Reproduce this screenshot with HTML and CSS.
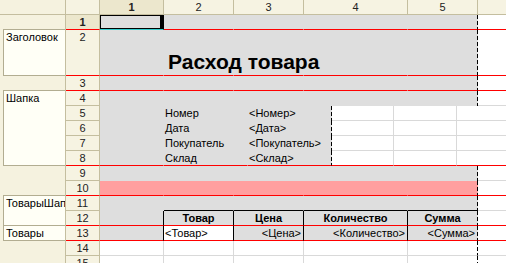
FILE: index.html
```html
<!DOCTYPE html>
<html lang="ru">
<head>
    <meta charset="UTF-8">
    <title>Расход товара - макет</title>
    <link rel="stylesheet" href="styles.css">
</head>
<body>

<div class="sheet">
    <!-- Named areas on the left -->
    <div class="groups">
        <div class="corner"></div>
        <div class="group g-title">Заголовок</div>
        <div class="group g-head">Шапка</div>
        <div class="group g-thead">ТоварыШапка</div>
        <div class="group g-rows">Товары</div>
    </div>

    <div class="grid">
        <!-- Column headers -->
        <div class="row">
            <div class="rn"></div>
            <div class="h hs w1">1</div>
            <div class="h w2">2</div>
            <div class="h w3">3</div>
            <div class="h w4">4</div>
            <div class="h w5">5</div>
            <div class="h wx"></div>
        </div>

        <div class="row sep">
            <div class="rn on">1</div>
            <div class="g w1 sel"></div>
            <div class="g w2"></div>
            <div class="g w3"></div>
            <div class="g w4"></div>
            <div class="g w5 dash"></div>
            <div class="w wx"></div>
        </div>
        <div class="row sep tall">
            <div class="rn">2</div>
            <div class="g w1"></div>
            <div class="g w2 title">Расход товара</div>
            <div class="g w3"></div>
            <div class="g w4"></div>
            <div class="g w5 dash"></div>
            <div class="w wx"></div>
        </div>
        <div class="row sep">
            <div class="rn">3</div>
            <div class="g w1"></div>
            <div class="g w2"></div>
            <div class="g w3"></div>
            <div class="g w4"></div>
            <div class="g w5 dash"></div>
            <div class="w wx"></div>
        </div>
        <div class="row">
            <div class="rn">4</div>
            <div class="g w1"></div>
            <div class="g w2"></div>
            <div class="g w3"></div>
            <div class="g w4"></div>
            <div class="g w5 dash"></div>
            <div class="w wx"></div>
        </div>

        <!-- Header block has its own column widths -->
        <div class="row">
            <div class="rn">5</div>
            <div class="g w1"></div>
            <div class="g k1">Номер</div>
            <div class="g k2 dash">&lt;Номер&gt;</div>
            <div class="w k3"></div>
            <div class="w k4"></div>
            <div class="w wx"></div>
        </div>
        <div class="row">
            <div class="rn">6</div>
            <div class="g w1"></div>
            <div class="g k1">Дата</div>
            <div class="g k2 dash">&lt;Дата&gt;</div>
            <div class="w k3"></div>
            <div class="w k4"></div>
            <div class="w wx"></div>
        </div>
        <div class="row">
            <div class="rn">7</div>
            <div class="g w1"></div>
            <div class="g k1">Покупатель</div>
            <div class="g k2 dash">&lt;Покупатель&gt;</div>
            <div class="w k3"></div>
            <div class="w k4"></div>
            <div class="w wx"></div>
        </div>
        <div class="row sep">
            <div class="rn">8</div>
            <div class="g w1"></div>
            <div class="g k1">Склад</div>
            <div class="g k2 dash">&lt;Склад&gt;</div>
            <div class="w k3"></div>
            <div class="w k4"></div>
            <div class="w wx"></div>
        </div>

        <div class="row">
            <div class="rn">9</div>
            <div class="g w1"></div>
            <div class="g w2"></div>
            <div class="g w3"></div>
            <div class="g w4"></div>
            <div class="g w5 dash"></div>
            <div class="w wx"></div>
        </div>
        <div class="row sep">
            <div class="rn">10</div>
            <div class="p w1"></div>
            <div class="p w2"></div>
            <div class="p w3"></div>
            <div class="p w4"></div>
            <div class="p w5 dash"></div>
            <div class="w wx"></div>
        </div>
        <div class="row">
            <div class="rn">11</div>
            <div class="g w1"></div>
            <div class="g w2 tt"></div>
            <div class="g w3 tt"></div>
            <div class="g w4 tt"></div>
            <div class="g w5 tt dash"></div>
            <div class="w wx"></div>
        </div>

        <!-- Goods table -->
        <div class="row sep">
            <div class="rn">12</div>
            <div class="g w1 tb"></div>
            <div class="g w2 tb th">Товар</div>
            <div class="g w3 tb th">Цена</div>
            <div class="g w4 tb th">Количество</div>
            <div class="g w5 dash th">Сумма</div>
            <div class="w wx"></div>
        </div>
        <div class="row sep">
            <div class="rn">13</div>
            <div class="g w1 tb"></div>
            <div class="w w2 tb txt">&lt;Товар&gt;</div>
            <div class="g w3 tb num">&lt;Цена&gt;</div>
            <div class="g w4 tb num">&lt;Количество&gt;</div>
            <div class="g w5 dash num">&lt;Сумма&gt;</div>
            <div class="w wx"></div>
        </div>

        <div class="row">
            <div class="rn">14</div>
            <div class="w w1"></div>
            <div class="w w2"></div>
            <div class="w w3"></div>
            <div class="w w4"></div>
            <div class="w w5 dash"></div>
            <div class="w wx"></div>
        </div>
        <div class="row">
            <div class="rn">15</div>
            <div class="w w1"></div>
            <div class="w w2"></div>
            <div class="w w3"></div>
            <div class="w w4"></div>
            <div class="w w5 dash"></div>
            <div class="w wx"></div>
        </div>
    </div>
</div>

</body>
</html>
```

FILE: styles.css
```css
* {
    box-sizing: border-box;
}

body {
    margin: 0;
    font: 11px "Liberation Sans", Arial, sans-serif;
    color: #000;
    background: #fff;
}

.sheet {
    display: flex;
    width: 506px;
    height: 263px;
    overflow: hidden;
}

/* Named areas column */
.groups {
    width: 66px;
    flex: none;
    display: flex;
    flex-direction: column;
    background: #f5f2df;
    border-right: 1px solid #c4be9f;
}

.corner {
    height: 15px;
    flex: none;
    border-bottom: 1px solid #c4be9f;
}

.group {
    flex: none;
    margin-left: 3px;
    padding-left: 2px;
    line-height: 14px;
    white-space: nowrap;
    overflow: hidden;
    background: #fffff6;
    border: 1px solid #b2ad91;
    border-right: 0;
}

.g-title { margin-top: 14px; height: 47px; }
.g-head { margin-top: 14px; height: 76px; }
.g-thead { margin-top: 29px; height: 31px; }
.g-rows { height: 15px; border-top: 0; }

/* Sheet rows */
.grid {
    flex: 1;
    display: flex;
    flex-direction: column;
}

.row {
    display: flex;
    flex: none;
    height: 15px;
}

.row.tall {
    height: 46px;
}

.row > div {
    flex: none;
    border-style: solid;
    border-width: 0 1px 1px 0;
    line-height: 14px;
    white-space: nowrap;
    overflow: hidden;
}

/* widths */
.rn { width: 34px; }
.w1 { width: 64px; }
.w2 { width: 70px; }
.w3 { width: 70px; }
.w4 { width: 104px; }
.w5 { width: 70px; }
.k1 { width: 84px; padding-left: 1px; }
.k2 { width: 84px; padding-left: 1px; }
.k3 { width: 62px; }
.k4 { width: 63px; }
.row > .wx { flex: 1; border-right-width: 0; }

/* headers */
.rn, .h {
    background-color: #f6f3e2;
    border-color: #c4be9f;
    color: #222;
    text-align: center;
}

.rn.on, .hs {
    background-color: #ece7cd;
    font-weight: bold;
}

/* cell fills */
.g {
    background-color: #dedede;
    border-color: transparent;
}

.p {
    background-color: #ff9f9f;
    border-color: transparent;
}

.w {
    background-color: #fff;
    border-color: #d9d9d9;
}

/* print area edge */
.dash {
    border-right-color: transparent;
    background-image: repeating-linear-gradient(to bottom, #000 0 4px, transparent 4px 6px);
    background-size: 1px 100%;
    background-position: right top;
    background-repeat: no-repeat;
    background-origin: border-box;
}

/* table borders */
.tt { border-bottom-color: #000; }
.tb { border-right-color: #000; }

/* area separators */
.sep > div {
    border-bottom-color: #f00;
}

/* current cell */
.sel {
    border-right-color: #000;
    box-shadow: inset 1px 1px 0 #000, inset -3px -1px 0 #000;
}

.sep > .sel {
    border-bottom-color: #33cccc;
}

.row > .title {
    position: relative;
    z-index: 1;
    overflow: visible;
    padding: 20px 0 0 4px;
    font-size: 21px;
    font-weight: bold;
    line-height: 24px;
}

.th {
    font-weight: bold;
    text-align: center;
}

.txt {
    padding-left: 1px;
}

.num {
    text-align: right;
    padding-right: 2px;
}
```
